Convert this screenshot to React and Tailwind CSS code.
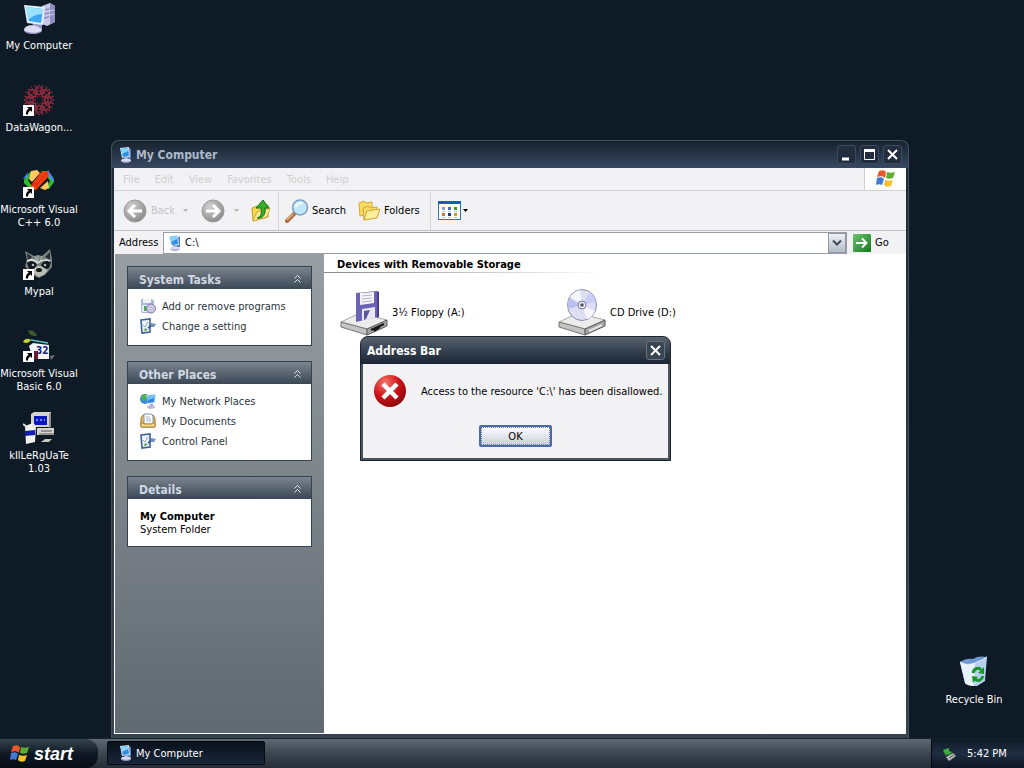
import { useState } from "react";

const MENU = ["File", "Edit", "View", "Favorites", "Tools", "Help"];

export default function App() {
  const [dialogOpen, setDialogOpen] = useState(true);

  return (
    <div className="h-screen flex flex-col overflow-hidden bg-[#0e1a26] text-[11px] leading-[13px] font-['DejaVu_Sans_Condensed','Noto_Sans',sans-serif] text-black">
      <main className="relative flex-1">
        {/* desktop shortcuts */}
        <div className="w-[78px] pt-[2px]">
          <Shortcut label="My Computer" icon={<ComputerIcon />} />
          <Shortcut label="DataWagon..." icon={<WagonIcon />} linked />
          <Shortcut label={"Microsoft Visual\nC++ 6.0"} icon={<CppIcon />} linked />
          <Shortcut label="Mypal" icon={<RaccoonIcon />} linked />
          <Shortcut label={"Microsoft Visual\nBasic 6.0"} icon={<VbIcon />} linked />
          <Shortcut label={"kIlLeRgUaTe\n1.03"} icon={<InstallerIcon />} />
        </div>
        <div className="absolute right-3 bottom-0 w-[76px]">
          <Shortcut label="Recycle Bin" icon={<RecycleIcon />} />
        </div>

        <ExplorerWindow />
        {dialogOpen && <ErrorDialog onClose={() => setDialogOpen(false)} />}
      </main>

      <Taskbar />
    </div>
  );
}

function ExplorerWindow() {
  return (
    <section className="absolute left-[111px] right-[115px] top-[140px] bottom-0 flex flex-col rounded-t-lg border border-b-0 border-[#465263] bg-linear-to-b from-[#1d2938] to-[#36424f] px-[2px] pb-1">
      <header className="h-[27px] -mx-[2px] px-[6px] flex items-center rounded-t-lg bg-linear-to-b from-[#18232f] to-[#384862]">
        <SmallComputerIcon />
        <h1 className="ml-[2px] pt-[2px] flex-1 text-[12px] font-bold text-[#aeb8c6]">My Computer</h1>
        <div className="flex gap-1">
          <CaptionButton label="Minimize">
            <path d="M5 14h7" strokeWidth="3" />
          </CaptionButton>
          <CaptionButton label="Maximize">
            <path d="M4.5 5v9.500h10V5" strokeWidth="1" />
            <path d="M4 5.500h11" strokeWidth="3" />
          </CaptionButton>
          <CaptionButton label="Close">
            <path d="M5 5l9 9M14 5l-9 9" strokeWidth="2" />
          </CaptionButton>
        </div>
      </header>

      <div className="flex-1 flex flex-col min-h-0 bg-white">
        <nav className="h-[23px] flex items-stretch border-b border-[#d0d0d2] bg-[#f2f2f4] text-[#cfcfd2]">
          <div className="flex-1 flex items-center gap-[15px] pl-[9px]">
            {MENU.map((m) => (
              <button key={m}>{m}</button>
            ))}
          </div>
          <div className="w-[42px] flex items-center justify-center border-l border-[#d0d0d2] bg-white">
            <FlagIcon className="size-5" />
          </div>
        </nav>

        <Toolbar />
        <AddressBar />

        <div className="flex-1 flex min-h-0 pl-px pb-px">
          <Sidebar />
          <FileList />
        </div>
      </div>
    </section>
  );
}

function CaptionButton({ label, children }) {
  return (
    <button
      aria-label={label}
      className="size-[19px] rounded-[3px] border border-[#3d4a5e] bg-[#222e3f]"
    >
      <svg viewBox="1 1 17 17" className="size-[17px]" fill="none" stroke="#fff">
        {children}
      </svg>
    </button>
  );
}

function Toolbar() {
  return (
    <div className="h-10 flex items-center border-b border-[#c4c4c6] bg-[#f2f2f4] pl-[9px]">
      <button className="flex items-center gap-1 text-[#c4c4c8]">
        <RoundArrow />
        Back
      </button>
      <Caret className="ml-2 text-[#b4b4b4]" />
      <button aria-label="Forward" className="ml-[13px]">
        <RoundArrow flip />
      </button>
      <Caret className="ml-[9px] text-[#b4b4b4]" />
      <button aria-label="Up" className="ml-[11px]">
        <UpFolderIcon />
      </button>
      <span className="ml-[6px] mr-[6px] w-px h-[38px] bg-[#d4d4d6]" />
      <button className="flex items-center gap-[3px]">
        <SearchIcon />
        Search
      </button>
      <button className="ml-3 flex items-center gap-[3px]">
        <FoldersIcon />
        Folders
      </button>
      <span className="ml-[10px] mr-[7px] w-px h-[38px] bg-[#d4d4d6]" />
      <button aria-label="Views" className="flex items-center gap-[2px]">
        <ViewsIcon />
        <Caret />
      </button>
    </div>
  );
}

function AddressBar() {
  return (
    <form
      className="h-[23px] flex items-center bg-[#f2f2f4] pl-[5px]"
      onSubmit={(e) => e.preventDefault()}
    >
      <label htmlFor="address" className="w-[44px]">Address</label>
      <div className="flex-1 h-[22px] flex items-center border border-[#9a9fa5] bg-white pl-[3px]">
        <SmallComputerIcon />
        <input id="address" defaultValue="C:\" className="flex-1 min-w-0 ml-[2px] outline-none" />
        <button
          type="button"
          aria-label="Show addresses"
          className="w-[18px] h-5 flex items-center justify-center border border-[#8f99a6] bg-linear-to-b from-[#f0f2f5] to-[#b4bcc8]"
        >
          <svg viewBox="0 0 10 8" className="w-[10px] h-2" fill="none" stroke="#3f4a58" strokeWidth="2">
            <path d="M1 1.500l4 4 4-4" />
          </svg>
        </button>
      </div>
      <button type="submit" className="w-[59px] pl-[6px] flex items-center gap-1">
        <svg viewBox="0 0 18 18" className="size-[18px]">
          <defs>
            <linearGradient id="go" x1="0" y1="0" x2="1" y2="1">
              <stop offset="0" stopColor="#6cc46c" />
              <stop offset="1" stopColor="#12791a" />
            </linearGradient>
          </defs>
          <rect width="18" height="18" rx="1" fill="url(#go)" />
          <path d="M3 9h10M9 4.500l4.500 4.500L9 13.500" fill="none" stroke="#fff" strokeWidth="2" />
        </svg>
        Go
      </button>
    </form>
  );
}

function Sidebar() {
  return (
    <aside className="w-[209px] shrink-0 flex flex-col gap-[15px] px-3 pt-3 bg-linear-to-b from-[#979fa3] to-[#606970]">
      <Panel title="System Tasks">
        <TaskLink icon={<ProgramsIcon />}>Add or remove programs</TaskLink>
        <TaskLink icon={<ControlIcon />}>Change a setting</TaskLink>
      </Panel>
      <Panel title="Other Places">
        <TaskLink icon={<NetworkIcon />}>My Network Places</TaskLink>
        <TaskLink icon={<DocumentsIcon />}>My Documents</TaskLink>
        <TaskLink icon={<ControlIcon />}>Control Panel</TaskLink>
      </Panel>
      <Panel title="Details">
        <div className="pt-1 pb-px">
          <p className="font-bold">My Computer</p>
          <p>System Folder</p>
        </div>
      </Panel>
    </aside>
  );
}

function Panel({ title, children }) {
  return (
    <section className="border border-[#35424f] bg-white">
      <header className="h-[22px] flex items-center justify-between pl-[11px] pr-[9px] bg-linear-to-b from-[#7c858e] to-[#3c4756]">
        <h2 className="pt-1 text-[12px] font-bold text-[#d0d8e2]">{title}</h2>
        <button aria-label={`Collapse ${title}`}>
          <svg viewBox="0 0 9 9" className="size-[9px]" fill="none" stroke="#e4e9ee">
            <path d="M1.500 4.500l3-3 3 3M1.500 8.500l3-3 3 3" />
          </svg>
        </button>
      </header>
      <div className="pt-[7px] pb-[9px] px-3">{children}</div>
    </section>
  );
}

function TaskLink({ icon, children }) {
  return (
    <a href="#" className="h-5 flex items-center gap-[6px] text-[#2a3440]">
      {icon}
      {children}
    </a>
  );
}

function FileList() {
  return (
    <div className="flex-1 min-w-0">
      <h2 className="pl-[13px] h-[18px] flex items-center pt-[2px] font-bold">
        Devices with Removable Storage
      </h2>
      <div className="h-px w-[280px] bg-linear-to-r from-[#85898e] to-white" />
      <div className="flex flex-wrap pl-4 pt-[15px]">
        <Drive label="3½ Floppy (A:)" icon={<FloppyIcon />} />
        <Drive label="CD Drive (D:)" icon={<CdIcon />} />
      </div>
    </div>
  );
}

function Drive({ label, icon }) {
  return (
    <button className="w-[218px] flex items-center gap-1 text-left">
      {icon}
      {label}
    </button>
  );
}

function ErrorDialog({ onClose }) {
  return (
    <div
      role="alertdialog"
      aria-labelledby="dialog-title"
      className="absolute left-[360px] top-[336px] w-[311px] rounded-t-lg border border-[#1b2430] bg-[#4a545f] px-[2px] pb-[2px]"
    >
      <header className="h-[27px] -mx-[2px] pl-[6px] pr-[5px] flex items-center justify-between rounded-t-lg bg-linear-to-b from-[#5a636e] via-[#364150] to-[#1c2634]">
        <h2 id="dialog-title" className="pt-[2px] text-[12px] font-bold text-white">Address Bar</h2>
        <button
          aria-label="Close"
          onClick={onClose}
          className="size-[19px] rounded-[3px] border border-[#6a7480] bg-[#3a4552]"
        >
          <svg viewBox="1 1 17 17" className="size-[17px]" fill="none" stroke="#fff" strokeWidth="2">
            <path d="M5 5l9 9M14 5l-9 9" />
          </svg>
        </button>
      </header>
      <div className="bg-[#f2f2f4] px-[11px] py-[11px]">
        <div className="flex items-center gap-[15px] whitespace-nowrap">
          <ErrorIcon />
          <p>Access to the resource 'C:\' has been disallowed.</p>
        </div>
        <div className="mt-[18px] flex justify-center">
          <button
            onClick={onClose}
            className="w-[73px] h-[22px] rounded-[2px] border-2 border-[#4a6aa6] bg-linear-to-b from-white to-[#c8cedb]"
          >
            <span className="flex h-full items-center justify-center border border-dotted border-[#6d7d9c]">
              OK
            </span>
          </button>
        </div>
      </div>
    </div>
  );
}

function Taskbar() {
  return (
    <footer className="h-[30px] flex items-stretch border-t border-[#18222d] bg-linear-to-b from-[#5f6974] via-[#3c4651] to-[#242d38] text-white">
      <button className="w-[98px] flex items-center gap-1 pl-[10px] rounded-r-xl bg-linear-to-b from-[#36444f] via-[#101a24] to-[#070d15]">
        <FlagIcon className="size-5" />
        <span className="font-['Liberation_Sans',sans-serif] text-[18px] leading-5 font-bold italic">
          start
        </span>
      </button>
      <div className="flex-1 pl-[9px] py-[2px]">
        <button className="w-[158px] h-6 flex items-center gap-[2px] pl-[10px] rounded-[2px] border border-[#06090e] bg-linear-to-b from-[#0a111c] to-[#1a273a]">
          <SmallComputerIcon />
          My Computer
        </button>
      </div>
      <div className="w-[93px] flex items-center gap-[9px] pl-[10px] border-l border-[#04080d] bg-linear-to-b from-[#101a27] via-[#1f2e42] to-[#0d1622]">
        <RemoveHardwareIcon />
        <time>5:42 PM</time>
      </div>
    </footer>
  );
}

function Shortcut({ icon, label, linked }) {
  return (
    <button className="w-full h-[82px] flex flex-col items-center text-white">
      <span className="relative block size-8">
        {icon}
        {linked && (
          <svg viewBox="0 0 11 11" className="absolute left-0 bottom-0 size-[11px]">
            <path d="M0 0h11v11H0z" fill="#fff" />
            <path d="M4 2h5v5L7.500 5.500C5.500 6.500 5 7.500 5 9.500H3C2.500 7 3.500 5 5.700 3.700z" fill="#000" />
          </svg>
        )}
      </span>
      <span className="mt-[5px] block whitespace-pre">{label}</span>
    </button>
  );
}

/* ---------- icons ---------- */

function Caret({ className = "" }) {
  return (
    <svg viewBox="0 0 5 3" className={`w-[5px] h-[3px] ${className}`} fill="currentColor">
      <path d="M0 0h5L2.500 3z" />
    </svg>
  );
}

function ComputerIcon() {
  return (
    <svg viewBox="0 0 32 32" className="size-8">
      <path d="M19 4l8-3 5 3v16l-8 4-5-2z" fill="#c9c7e8" />
      <path d="M27 1l5 3v16l-5 2z" fill="#8f8cc2" />
      <path d="M21 8l5-1M21 12l5-1M21 16l5-1" stroke="#8a87bb" strokeWidth="1.500" />
      <path d="M27 9l4-1M27 13l4-1" stroke="#d6d5f0" />
      <path d="M10 20l9 2v6H9z" fill="#9a98c8" />
      <path d="M1 3l21 2-2 18L4 21z" fill="#e4f0fb" />
      <path d="M3 5l17 2-2 14-12-2z" fill="#3fa6f2" />
      <path d="M3 5l17 2-1 5c-5 0-10 2-14 6z" fill="#9be2ff" />
      <path d="M1 28c0-4 7-6 12-4s7 4 5 6c-5 3-17 2-17-2z" fill="#dddcf2" />
      <path d="M1 28c3 3 12 4 17 1-1 4-16 4-17-1z" fill="#8f8cbf" />
    </svg>
  );
}

function SmallComputerIcon() {
  return (
    <svg viewBox="0 0 16 16" className="size-4">
      <path d="M9 1l4 1v10l-4 1z" fill="#5a78b8" />
      <path d="M2 1l9-1 1 10-8 1z" fill="#cfe8fa" />
      <path d="M3 2l7-1 1 8-6 1z" fill="#2d8fe0" />
      <path d="M3 2l7-1v3L4 7z" fill="#86d4fb" />
      <path d="M6 10l4 0v3H6z" fill="#9aa0d0" />
      <ellipse cx="8" cy="13.500" rx="5" ry="2" fill="#dadcf2" />
      <path d="M4 14.500c2 1 6 1 8 0" fill="none" stroke="#8c92c4" />
    </svg>
  );
}

function WagonIcon() {
  const spokes = [0, 45, 90, 135, 180, 225, 270, 315];
  return (
    <svg viewBox="0 0 32 32" className="size-8" fill="none" stroke="#a82f44" strokeWidth="0.900">
      {spokes.map((a) => (
        <g key={a} transform={`rotate(${a} 16 16)`}>
          <path d="M16 11l-4-5 4-5 4 5z" />
          <path d="M12 1l2 6 4 0 2-6M10 8l6 3 6-3M13 4h6" />
        </g>
      ))}
      <circle cx="16" cy="16" r="4" stroke="#6c2030" />
    </svg>
  );
}

function CppIcon() {
  return (
    <svg viewBox="0 0 32 32" className="size-8">
      <path d="M1 14l6-8h2l-4 8 5 8H6l-5-5z" fill="#2bc02b" />
      <path d="M0 13l5-7-1 6z" fill="#4a8af0" />
      <path d="M25 7l6 7v2l-5 7-2-2 3-6-4-6z" fill="#2bc02b" />
      <path d="M25 4l6 9-1 3-6-8z" fill="#4a8af0" />
      <path d="M8 5l6-1 3 3-8 9-3-3z" fill="#ffc860" />
      <path d="M17 22l8-7 1 7-4 2z" fill="#ffc860" />
      <path d="M8 19L19 5h6l1 5-13 14-5-1z" fill="#f23c14" />
      <path d="M9 18h5l11-12M14 18v6" fill="none" stroke="#c42408" strokeWidth="0.800" />
    </svg>
  );
}

function RaccoonIcon() {
  return (
    <svg viewBox="0 0 32 32" className="size-8">
      <path d="M2 3l9 5c3-1 6-1 8 0l8-7 2 10v8l-6 7-7 4-8-4-6-8 2-6z" fill="#78817f" />
      <path d="M4 5l5 4-4 4zM27 4l-5 5 5 3z" fill="#252d35" />
      <path d="M12 8l2 5M15 7v7M19 8l-2 6" stroke="#b3bab4" />
      <path d="M4 15c4-3 8-2 10 2l-3 5-5-1zM28 14c-4-2-8-1-10 3l3 5 5-2z" fill="#12181d" />
      <path d="M4 13c4-2 8-1 11 2 3-3 8-4 12-2" fill="none" stroke="#dde2da" strokeWidth="1.500" />
      <path d="M8 23l6-5h4l7 4-4 5-6 2z" fill="#b9beb2" />
      <circle cx="10" cy="17" r="1.300" fill="#a9b8c0" />
      <circle cx="22" cy="17" r="1.300" fill="#a9b8c0" />
      <ellipse cx="16" cy="22" rx="3" ry="2" fill="#14181c" />
    </svg>
  );
}

function VbIcon() {
  return (
    <svg viewBox="0 0 32 32" className="size-8">
      <path d="M5 1c4-2 7 0 9 5-5 0-8-1-9-5z" fill="#3c5a2c" />
      <path d="M0 12c2-4 5-4 8-2-2 3-5 4-8 2z" fill="#c4cf3c" />
      <path d="M8 10l17 3" stroke="#5fc4c8" strokeWidth="1.500" />
      <path d="M6 16l4-3 16 2v14H10z" fill="#f4f4f8" />
      <path d="M11 21h4v8h-4z" fill="#6c1c2c" />
      <path d="M27 26l5-1-4 5z" fill="#76767e" />
      <text x="13" y="24" fontSize="10" fontWeight="bold" fill="#1a2470">32</text>
    </svg>
  );
}

function InstallerIcon() {
  return (
    <svg viewBox="0 0 32 32" className="size-8">
      <path d="M8 2l3-2h17v15H8z" fill="#d4d4cc" />
      <path d="M26 2l2-2v15l-2 1z" fill="#8c8c84" />
      <path d="M11 4h13v9H11z" fill="#0a18c0" />
      <path d="M13 8h2M17 8h2M21 8h1" stroke="#8fb0ff" strokeWidth="1.500" />
      <path d="M14 16h17v7H14z" fill="#d4d4cc" />
      <path d="M18 19h11M16 22h15" stroke="#55554f" />
      <path d="M18 30l4-3h7l-3 3z" fill="#c4c4bc" />
      <path d="M2 14l8-3 3 3-1 16-9 2z" fill="#f0f0ec" />
      <path d="M2 19l10-1v5L2 24z" fill="#1020b0" />
      <path d="M0 12l4 3M12 13l-3 2" stroke="#e0e0dc" strokeWidth="2" />
    </svg>
  );
}

function RecycleIcon() {
  return (
    <svg viewBox="0 0 32 32" className="size-8">
      <path d="M2 6c5 3 10 3 15 1 4-2 8-3 12-6l-2 24-8 5c-5 0-10-1-12-3z" fill="#b6d0ee" />
      <path d="M2 6c5 3 10 3 15 1l-1 23c-4 0-8-1-9-3z" fill="#e6f1fc" />
      <path d="M2 6c4-3 9-4 13-3 4-3 9-3 14-2-4 3-8 4-12 6-5 2-10 2-15-1z" fill="#6f9ad2" />
      <path d="M2 6c5 3 10 3 15 1 4-2 8-3 12-6" fill="none" stroke="#f4faff" />
      <g fill="none" stroke="#18962a" strokeWidth="3">
        <path d="M15 17c1-5 6-6 8-3" />
        <path d="M25 20c-1 4-5 6-8 3" />
      </g>
      <path d="M26 11v7l-6-1zM14 20l6 1-5 6z" fill="#18962a" />
    </svg>
  );
}

function FlagIcon({ className }) {
  return (
    <svg viewBox="0 0 20 20" className={className}>
      <path d="M3 2c3-1 5-1 7 1L9 9C7 7 4 7 1 8z" fill="#e8562a" />
      <path d="M11 3c3 1 5 1 8 0l-2 6c-3 1-5 1-7 0z" fill="#5cae32" />
      <path d="M1 9c3-1 5-1 7 1l-2 6c-2-1-4-1-6 0z" fill="#4179d4" />
      <path d="M9 11c3 1 5 1 8 0l-2 6c-3 1-5 1-7-1z" fill="#f6c026" />
    </svg>
  );
}

function RoundArrow({ flip }) {
  return (
    <svg viewBox="0 0 24 24" className="size-6">
      <defs>
        <radialGradient id="round" cx="0.35" cy="0.3" r="0.8">
          <stop offset="0" stopColor="#d2d2d2" />
          <stop offset="1" stopColor="#858585" />
        </radialGradient>
      </defs>
      <circle cx="12" cy="12" r="11" fill="url(#round)" stroke="#9c9c9c" />
      <path
        d={flip ? "M5 12h12M12 6l6 6-6 6" : "M19 12H7M12 6l-6 6 6 6"}
        fill="none"
        stroke="#fff"
        strokeWidth="3"
      />
    </svg>
  );
}

function UpFolderIcon() {
  return (
    <svg viewBox="0 0 22 24" className="w-[22px] h-6">
      <path d="M2 9l5-2 2 2 9-3v12L3 22z" fill="#f6d652" stroke="#c89a28" />
      <path d="M3 22l4-9 13-4-3 9z" fill="#fdee92" stroke="#d0a838" />
      <path d="M7 19c4-1 5-5 4-10H6l7-8 6 8h-4c1 6-2 11-8 10z" fill="#35ae2c" stroke="#177016" />
    </svg>
  );
}

function SearchIcon() {
  return (
    <svg viewBox="0 0 24 24" className="size-6">
      <path d="M2 22l8-8" stroke="#b06c3c" strokeWidth="4" strokeLinecap="round" />
      <path d="M2 21l6-6" stroke="#e4b084" strokeWidth="1.500" />
      <circle cx="15" cy="8.500" r="7.500" fill="#bfe6fb" stroke="#7f9dc2" strokeWidth="1.500" />
      <path d="M10.500 8c1-3 4-4.500 7-3.500" fill="none" stroke="#fff" strokeWidth="2" />
    </svg>
  );
}

function FoldersIcon() {
  return (
    <svg viewBox="0 0 23 22" className="w-[23px] h-[22px]" stroke="#d0a53a">
      <path d="M1 3l5-2 2 2 6-1v11L2 16z" fill="#f9dc62" />
      <path d="M5 8l5-2 2 2 7-1v10L6 20z" fill="#f9dc62" />
      <path d="M6 20l3-9 13-2-3 9z" fill="#fdf09c" />
    </svg>
  );
}

function ViewsIcon() {
  return (
    <svg viewBox="0 0 23 19" className="w-[23px] h-[19px]">
      <rect x="0.500" y="0.500" width="22" height="18" fill="#fff" stroke="#2474b8" />
      <path d="M0 0h23v3H0z" fill="#1560b0" />
      <path d="M4 6h3v3H4z" fill="#8f9fd0" />
      <path d="M10 6h3v3h-3z" fill="#4a70c0" />
      <path d="M16 6h3v3h-3z" fill="#3b9a34" />
      <path d="M4 12h3v3H4z" fill="#e0703c" />
      <path d="M10 12h3v3h-3z" fill="#1c3c90" />
      <path d="M16 12h3v3h-3z" fill="#c0a030" />
      <path d="M4 10.500h3M10 10.500h3M16 10.500h3M4 16.500h3M10 16.500h3M16 16.500h3" stroke="#b8c4d0" />
    </svg>
  );
}

function ProgramsIcon() {
  return (
    <svg viewBox="0 0 16 16" className="size-4">
      <path d="M1 1h11l2 2v10l-2 2H2l-1-2z" fill="#a9b9dc" />
      <path d="M3 1h8v4H3z" fill="#f0f3fa" />
      <path d="M2 7h9v7H2z" fill="#e6ecf6" />
      <path d="M4 8h3v5H4z" fill="#55a550" />
      <circle cx="11" cy="10.500" r="4.500" fill="#cfc8e6" stroke="#8078ae" />
      <circle cx="11" cy="10.500" r="1.200" fill="#fff" stroke="#8078ae" strokeWidth="0.500" />
    </svg>
  );
}

function ControlIcon() {
  return (
    <svg viewBox="0 0 16 16" className="size-4">
      <path d="M1 2l9-1v13l-8 1z" fill="#eef4fc" stroke="#3d5f9a" strokeWidth="1.600" />
      <path d="M3 7l2 2 3-5" fill="none" stroke="#8fa8cc" />
      <path d="M8 10l4-3" stroke="#3f5f94" strokeWidth="2" />
      <path d="M5 10l3 2-4 1z" fill="#4f9448" />
      <path d="M11 5l5 1-2 3-3 0z" fill="#6f8fc0" />
    </svg>
  );
}

function NetworkIcon() {
  return (
    <svg viewBox="0 0 16 16" className="size-4">
      <circle cx="5" cy="6" r="5" fill="#3a8bd8" />
      <path d="M1 3c3-3 6-2 7 0L4 8 2 7z" fill="#4cb050" />
      <path d="M6 2l10-1-1 9-7 1z" fill="#c4e2f8" />
      <path d="M7 3l8-1-1 7-6 1z" fill="#2c88da" />
      <path d="M7 3l8-1-1 3-6 2z" fill="#72c4f4" />
      <path d="M10 11h3v2h-3z" fill="#a4a4cc" />
      <ellipse cx="11" cy="14" rx="4" ry="1.800" fill="#b8b8e0" />
    </svg>
  );
}

function DocumentsIcon() {
  return (
    <svg viewBox="0 0 16 16" className="size-4">
      <path d="M1 5l2-3h10l2 3v9H1z" fill="#e9bd58" stroke="#a97c2c" />
      <path d="M4 1h7l2 2v8H4z" fill="#fff" stroke="#7c90b4" />
      <path d="M6 4h4M6 6h5M6 8h5" stroke="#a9b6cc" />
      <path d="M1 9l3 2h8l3-2v5H1z" fill="#f8dc88" stroke="#a97c2c" />
    </svg>
  );
}

function DriveBase() {
  return (
    <>
      <path d="M1 34l19-9 27 7-20 9z" fill="#ececea" stroke="#a8a8a6" />
      <path d="M1 34l26 7v6L1 39z" fill="#c4c4c3" stroke="#77777a" />
      <path d="M27 41l20-9v6l-20 9z" fill="#a4a4a4" stroke="#5c5c60" />
    </>
  );
}

function FloppyIcon() {
  return (
    <svg viewBox="0 0 48 48" className="size-12">
      <DriveBase />
      <path d="M31 42l13-6M34 43l6-4" stroke="#151515" strokeWidth="2" />
      <path d="M16 5l21-2 1 26-22 5z" fill="#6a62b4" />
      <path d="M37 3l2 1v25l-2 1z" fill="#46408a" />
      <path d="M20 5l14-1v11l-14 2z" fill="#f4f4fa" />
      <path d="M22 8l10-1M22 11l10-1M22 14l10-1" stroke="#b4b4cc" />
      <path d="M22 21l13-2v11l-13 3z" fill="#e6e6f2" />
      <path d="M24 23l6-1-4 9-2 1z" fill="#5a549c" />
    </svg>
  );
}

function CdIcon() {
  return (
    <svg viewBox="0 0 48 48" className="size-12">
      <DriveBase />
      <path d="M31 43l13-6" stroke="#e4e4e4" strokeWidth="2" />
      <ellipse cx="24" cy="17" rx="14.500" ry="15.500" fill="#dfdff4" stroke="#8c8cae" />
      <path d="M24 17L12 9c3-4 6-6 10-7zM24 17l13 6c-2 4-4 7-8 8z" fill="#f6f6ff" />
      <path d="M24 17L10 21c-1-4 0-8 1-11z" fill="#bcc0ee" />
      <path d="M24 17l8-13c3 3 5 6 6 10z" fill="#c9ccf4" />
      <circle cx="24" cy="17" r="4" fill="#ececf4" stroke="#77779c" />
      <circle cx="24" cy="17" r="1.800" fill="#55556c" />
    </svg>
  );
}

function ErrorIcon() {
  return (
    <svg viewBox="0 0 32 32" className="size-8 shrink-0">
      <defs>
        <radialGradient id="err" cx="0.35" cy="0.25" r="0.85">
          <stop offset="0" stopColor="#f4796c" />
          <stop offset="0.5" stopColor="#d0141a" />
          <stop offset="1" stopColor="#7c0408" />
        </radialGradient>
      </defs>
      <circle cx="16" cy="16" r="16" fill="url(#err)" />
      <path d="M9 9l14 14M23 9L9 23" stroke="#fff" strokeWidth="4.500" />
    </svg>
  );
}

function RemoveHardwareIcon() {
  return (
    <svg viewBox="0 0 16 16" className="size-4">
      <path d="M4 11l7-4 3 3-7 5z" fill="#c4ccc8" stroke="#5c6864" />
      <path d="M7 12l5-3" stroke="#39443f" />
      <path d="M1 4l6-2v3l3 1-3 3-2-1-1 2z" fill="#3cae3c" />
    </svg>
  );
}
